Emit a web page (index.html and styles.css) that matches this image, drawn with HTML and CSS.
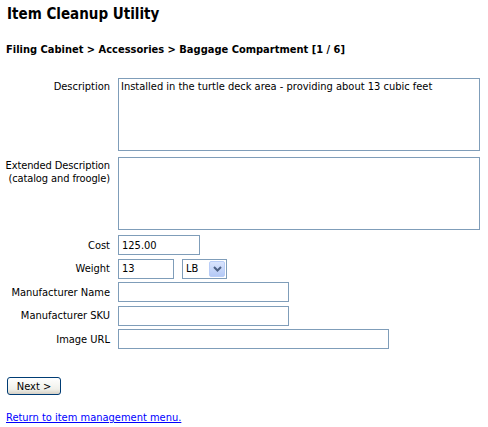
FILE: index.html
```html
<!DOCTYPE html>
<html>
<head>
<meta charset="utf-8">
<title>Item Cleanup Utility</title>
<link rel="stylesheet" href="styles.css">
</head>
<body>
<h1 class="title">Item Cleanup Utility</h1>
<h2 class="crumbs">Filing Cabinet &gt; Accessories &gt; Baggage Compartment [1 / 6]</h2>
<form class="item-form">
  <div class="grid">
    <label class="lbl lbl-top" for="desc">Description</label>
    <textarea id="desc" class="field area">Installed in the turtle deck area - providing about 13 cubic feet</textarea>

    <label class="lbl lbl-top lbl-ext" for="ext">Extended Description<br>(catalog and froogle)</label>
    <textarea id="ext" class="field area area-ext"></textarea>

    <label class="lbl" for="cost">Cost</label>
    <input id="cost" class="field txt w-cost" type="text" value="125.00">

    <label class="lbl" for="weight">Weight</label>
    <div class="weight-row">
      <input id="weight" class="field txt w-weight" type="text" value="13">
      <span class="select-wrap">
        <select class="field sel"><option>LB</option><option>KG</option><option>OZ</option></select>
        <span class="sel-btn"><svg width="9" height="6" viewBox="0 0 9 6"><path d="M1 1 L4.5 4.5 L8 1" fill="none" stroke="#4d6185" stroke-width="2"/></svg></span>
      </span>
    </div>

    <label class="lbl" for="mname">Manufacturer Name</label>
    <input id="mname" class="field txt w-med" type="text">

    <label class="lbl" for="msku">Manufacturer SKU</label>
    <input id="msku" class="field txt w-med" type="text">

    <label class="lbl" for="img">Image URL</label>
    <input id="img" class="field txt w-long" type="text">
  </div>
  <button type="button" class="btn">Next &gt;</button>
</form>
<a class="back" href="#">Return to item management menu.</a>
</body>
</html>
```
FILE: styles.css
```css
body {
  margin: 0;
  padding: 4px 6px;
  background: #fff;
  color: #000;
  font-family: "DejaVu Sans Condensed", "DejaVu Sans", sans-serif;
  font-size: 11px;
}

.title {
  margin: 0;
  padding-left: 1px;
  font-size: 15px;
  line-height: 20px;
  font-weight: bold;
}

.crumbs {
  margin: 19px 0 0;
  font-size: 11px;
  line-height: 14px;
  font-weight: bold;
}

.item-form {
  margin-top: 21px;
}

.grid {
  display: grid;
  grid-template-columns: 104px auto;
  column-gap: 8px;
  row-gap: 3.5px;
  align-items: center;
  justify-items: start;
}

.lbl {
  justify-self: unsafe end;
  text-align: right;
  line-height: 13px;
  white-space: nowrap;
}

.lbl-top {
  align-self: start;
  padding-top: 2px;
}

.lbl-ext {
  margin-top: 2.5px;
  letter-spacing: -0.1px;
}

.field {
  box-sizing: border-box;
  margin: 0;
  border: 1px solid #7f9db9;
  background: #fff;
  color: #000;
  font-family: inherit;
  font-size: 11px;
  border-radius: 0;
  outline: none;
}

.area {
  width: 362px;
  height: 73px;
  padding: 1px 2px;
  resize: none;
  line-height: 13px;
  overflow: hidden;
}

.area-ext {
  margin-top: 2.5px;
  margin-bottom: 1.5px;
}

.txt {
  height: 20px;
  padding: 1px 3px;
}

.w-cost { width: 82px; }
.w-weight { width: 56px; }
.w-med { width: 171px; }
.w-long { width: 271px; }

.weight-row {
  display: flex;
  align-items: center;
  gap: 8px;
}

.select-wrap {
  position: relative;
  display: inline-block;
}

.sel {
  appearance: none;
  -webkit-appearance: none;
  width: 45px;
  height: 20px;
  padding: 0 0 0 3px;
  line-height: 18px;
}

.sel-btn {
  position: absolute;
  top: 2px;
  right: 2px;
  width: 16px;
  height: 16px;
  box-sizing: border-box;
  border: 1px solid #b9cdf7;
  border-radius: 2px;
  background: linear-gradient(#d9e4fd, #b4c9f6);
  display: flex;
  align-items: center;
  justify-content: center;
  pointer-events: none;
}

.btn {
  display: block;
  margin: 28px 0 0 1px;
  width: 54px;
  height: 18px;
  padding: 0;
  border: 1px solid #003c74;
  border-radius: 3px;
  background: linear-gradient(#ffffff, #f0f0ea 70%, #d6d0c5);
  font-family: inherit;
  font-size: 11px;
  color: #000;
}

.back {
  display: inline-block;
  margin-top: 16px;
  color: #0000ff;
  text-decoration: underline;
  font-size: 11px;
}
```
